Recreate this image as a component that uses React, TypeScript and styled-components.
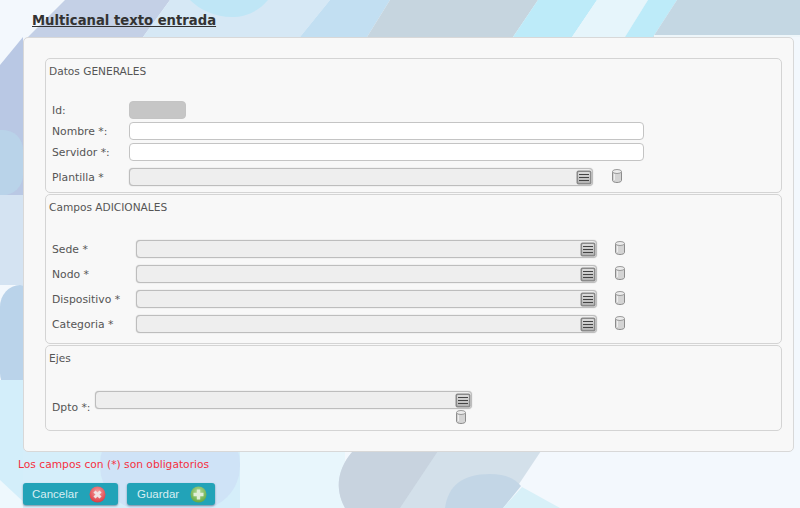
import styled, { createGlobalStyle } from 'styled-components'

const GlobalStyle = createGlobalStyle`
  html, body {
    margin: 0;
    padding: 0;
    background: #f2f8fd;
  }
  * {
    box-sizing: border-box;
  }
`

const Page = styled.div`
  position: relative;
  width: 800px;
  height: 508px;
  overflow: hidden;
  padding: 12px 6px 0 23px;
  font-family: 'DejaVu Sans', Verdana, sans-serif;
`

const Backdrop = styled.svg`
  position: absolute;
  inset: 0;
  z-index: 0;
`

const Content = styled.div`
  position: relative;
  z-index: 1;
`

const Title = styled.h1`
  margin: 0 0 8px 9px;
  height: 17px;
  font-size: 13.2px;
  line-height: 17px;
  font-weight: bold;
  color: #333;
  text-decoration: underline;
`

const Panel = styled.div`
  height: 415px;
  padding: 20px 11px 0 21px;
  background: #f8f8f8;
  border: 1px solid #d8d8d8;
  border-radius: 5px;
  display: flex;
  flex-direction: column;
  gap: 1px;
`

const Group = styled.div<{ $height: number }>`
  height: ${({ $height }) => $height}px;
  padding: 5px 3px 0 3px;
  border: 1px solid #d4d4d4;
  border-radius: 5px;
`

const GroupTitle = styled.div<{ $gap: number }>`
  height: 14px;
  margin-bottom: ${({ $gap }) => $gap}px;
  font-size: 10.6px;
  line-height: 14px;
  color: #555;
`

const Row = styled.div<{ $mb?: number }>`
  display: flex;
  align-items: center;
  height: 18px;
  margin-bottom: ${({ $mb }) => $mb ?? 3}px;
`

const Label = styled.label<{ $width: number; $drop?: number }>`
  flex: none;
  width: ${({ $width }) => $width}px;
  padding-left: 3px;
  padding-top: ${({ $drop }) => $drop ?? 0}px;
  font-size: 10.8px;
  white-space: nowrap;
  color: #555;
`

const TextInput = styled.div<{ $disabled?: boolean }>`
  width: ${({ $disabled }) => ($disabled ? 57 : 515)}px;
  height: 18px;
  background: ${({ $disabled }) => ($disabled ? '#c6c6c6' : '#fff')};
  border: 1px solid #c4c4c4;
  border-radius: 4px;
`

const Select = styled.div<{ $width: number }>`
  flex: none;
  display: flex;
  justify-content: flex-end;
  align-items: center;
  width: ${({ $width }) => $width}px;
  height: 18px;
  background: #eeeeee;
  border: 1px solid #bdbdbd;
  border-radius: 4px;
  box-shadow: 0 0 1px #aaa;
`

const Trash = styled.span<{ $ml: number }>`
  display: flex;
  margin: -3px 0 0 ${({ $ml }) => $ml}px;
`

const StackedTrash = styled.div`
  display: flex;
  height: 14px;
  margin: -2px 0 0 407px;
`

const Required = styled.p`
  margin: 6px 0 0 -5px;
  height: 13px;
  font-size: 10.7px;
  line-height: 13px;
  color: #f5303f;
`

const Actions = styled.div`
  display: flex;
  gap: 9px;
  margin-top: 12px;
`

const Button = styled.button<{ $width: number; $textWidth: number }>`
  display: flex;
  align-items: center;
  width: ${({ $width }) => $width}px;
  height: 22px;
  padding: 0 0 0 ${({ $textWidth }) => $textWidth}px;
  gap: 11px;
  background: #22a3b8;
  border: 0;
  border-radius: 3px;
  box-shadow: 0 1px 2px rgba(40, 70, 90, 0.55);
  color: #d8eef2;
  font-family: 'Liberation Sans', Arial, sans-serif;
  font-size: 11.5px;
`

function MenuIcon() {
  return (
    <svg width="16" height="15" viewBox="0 0 16 15">
      <defs>
        <linearGradient id="menuFill" x1="0" y1="0" x2="0" y2="1">
          <stop offset="0" stopColor="#dcdcdc" />
          <stop offset="1" stopColor="#b4b4b4" />
        </linearGradient>
      </defs>
      <rect x="0.5" y="0.5" width="15" height="14" rx="2" fill="#8a8a8a" />
      <rect x="2" y="2" width="12" height="11" rx="1" fill="url(#menuFill)" />
      <path d="M3 4.5h10M3 7.5h10M3 10.5h10" stroke="#444" strokeWidth="1" />
    </svg>
  )
}

function CylinderIcon() {
  return (
    <svg width="10" height="14" viewBox="0 0 10 14">
      <path d="M0.5 2.5v9c0 1 2 2 4.5 2s4.5-1 4.5-2v-9" fill="#d4d4d4" stroke="#8c8c8c" />
      <ellipse cx="5" cy="2.5" rx="4.5" ry="2" fill="#ececec" stroke="#999" />
      <path d="M2.5 5v6" stroke="#eee" strokeWidth="1" />
    </svg>
  )
}

function CancelIcon() {
  return (
    <svg width="17" height="17" viewBox="0 0 17 17">
      <defs>
        <radialGradient id="cancelFill" cx="0.5" cy="0.35" r="0.7">
          <stop offset="0" stopColor="#f6a4a4" />
          <stop offset="1" stopColor="#d9323a" />
        </radialGradient>
      </defs>
      <circle cx="8.5" cy="8.5" r="8" fill="url(#cancelFill)" />
      <path d="M5.5 5.5l6 6M11.5 5.5l-6 6" stroke="#f0e4e4" strokeWidth="3" />
    </svg>
  )
}

function SaveIcon() {
  return (
    <svg width="17" height="17" viewBox="0 0 17 17">
      <defs>
        <radialGradient id="saveFill" cx="0.5" cy="0.35" r="0.7">
          <stop offset="0" stopColor="#b5dc9c" />
          <stop offset="1" stopColor="#5da53a" />
        </radialGradient>
      </defs>
      <circle cx="8.5" cy="8.5" r="8" fill="url(#saveFill)" />
      <path d="M8.5 3.5v10M3.5 8.5h10" stroke="#dfeed8" strokeWidth="3.4" />
    </svg>
  )
}

const extraFields = ['Sede *', 'Nodo *', 'Dispositivo *', 'Categoria *']

export default function App() {
  return (
    <Page>
      <GlobalStyle />
      <Backdrop width="800" height="508" viewBox="0 0 800 508">
        <rect width="800" height="508" fill="#f3f8fd" />
        {/* top bands */}
        <polygon points="65,0 170,0 143,37 28,37" fill="#c4d0e6" />
        <polygon points="170,0 330,0 300,37 143,37" fill="#d6e8f5" />
        <path d="M190 0H268C258 12 245 17 232 17C215 17 200 10 190 0Z" fill="#bfe6f6" />
        <polygon points="330,0 390,0 367,37 300,37" fill="#c2dff2" />
        <polygon points="390,0 538,0 513,37 367,37" fill="#c6d5df" />
        <polygon points="538,0 597,0 572,37 513,37" fill="#bdebf9" />
        <polygon points="597,0 648,0 625,37 572,37" fill="#e6f5fb" />
        <polygon points="648,0 677,0 653,37 625,37" fill="#bdebf9" />
        <polygon points="677,0 800,0 800,37 653,37" fill="#c4d7e3" />
        <rect x="654" y="35" width="146" height="2" fill="#eef6fa" />
        {/* left edge */}
        <polygon points="23,37 23,200 0,200 0,65" fill="#b9c8e4" />
        <rect x="-30" y="130" width="53" height="65" rx="20" fill="#b9d3e9" />
        <rect x="0" y="195" width="23" height="90" fill="#d4e3f2" />
        <rect x="0" y="285" width="40" height="110" rx="22" fill="#bad3ea" />
        <polygon points="0,380 23,380 23,508 0,500" fill="#d3eefa" />
        <polygon points="0,480 30,508 0,508" fill="#eef8fd" />
        {/* bottom shapes */}
        <rect x="23" y="440" width="217" height="68" fill="#d5eefa" />
        <rect x="100" y="420" width="140" height="90" rx="44" fill="#cfe3f7" />
        <rect x="240" y="451" width="105" height="57" fill="#e8f6fc" />
        <path d="M353 451H541L503 508H345C334 488 338 468 353 451Z" fill="#d3e0ea" />
        <path d="M353 451H438L400 508H345C334 488 338 468 353 451Z" fill="#c8d3df" />
        <path d="M445 508C448 486 462 474 490 474C505 474 514 478 521 486L503 508Z" fill="#c3d6e6" />
        <polygon points="522,487 560,508 503,508" fill="#d8f0f8" />
      </Backdrop>
      <Content>
        <Title>Multicanal texto entrada</Title>
        <Panel>
          <Group $height={135}>
            <GroupTitle $gap={23}>Datos GENERALES</GroupTitle>
            <Row>
              <Label $width={80}>Id:</Label>
              <TextInput $disabled />
            </Row>
            <Row>
              <Label $width={80}>Nombre *:</Label>
              <TextInput />
            </Row>
            <Row $mb={7}>
              <Label $width={80}>Servidor *:</Label>
              <TextInput />
            </Row>
            <Row>
              <Label $width={80}>Plantilla *</Label>
              <Select $width={464}>
                <MenuIcon />
              </Select>
              <Trash $ml={19}>
                <CylinderIcon />
              </Trash>
            </Row>
          </Group>
          <Group $height={150}>
            <GroupTitle $gap={26}>Campos ADICIONALES</GroupTitle>
            {extraFields.map((field) => (
              <Row key={field} $mb={7}>
                <Label $width={87}>{field}</Label>
                <Select $width={461}>
                  <MenuIcon />
                </Select>
                <Trash $ml={18}>
                  <CylinderIcon />
                </Trash>
              </Row>
            ))}
          </Group>
          <Group $height={86}>
            <GroupTitle $gap={26}>Ejes</GroupTitle>
            <Row>
              <Label $width={46} $drop={14}>Dpto *:</Label>
              <Select $width={377}>
                <MenuIcon />
              </Select>
            </Row>
            <StackedTrash>
              <CylinderIcon />
            </StackedTrash>
          </Group>
        </Panel>
        <Required>Los campos con (*) son obligatorios</Required>
        <Actions>
          <Button $width={95} $textWidth={9}>
            Cancelar
            <CancelIcon />
          </Button>
          <Button $width={88} $textWidth={10}>
            Guardar
            <SaveIcon />
          </Button>
        </Actions>
      </Content>
    </Page>
  )
}
